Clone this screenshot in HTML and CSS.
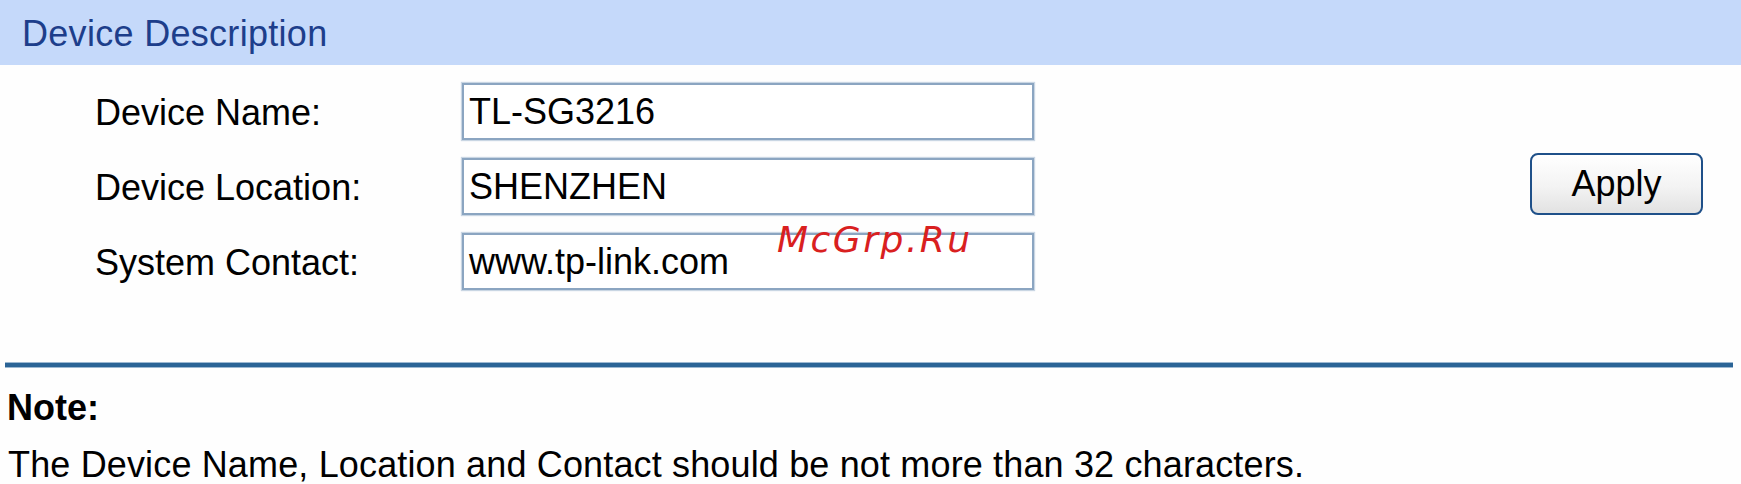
FILE: index.html
```html
<!DOCTYPE html>
<html>
<head>
<meta charset="utf-8">
<title>Device Description</title>
<link rel="stylesheet" href="styles.css">
</head>
<body>
<div class="page">
  <div class="section-head">Device Description</div>
  <div class="form-area">
    <div class="fields">
      <label class="field-label">Device Name:</label>
      <div class="field-box">TL-SG3216</div>
      <label class="field-label">Device Location:</label>
      <div class="field-box">SHENZHEN</div>
      <label class="field-label">System Contact:</label>
      <div class="field-box">www.tp-link.com</div>
    </div>
    <button class="apply-btn" type="button">Apply</button>
  </div>
  <div class="divider"></div>
  <div class="note">
    <div class="note-title">Note:</div>
    <div class="note-text">The Device Name, Location and Contact should be not more than 32 characters.</div>
  </div>
  <div class="watermark">McGrp.Ru</div>
</div>
</body>
</html>
```
FILE: styles.css
```css
html, body {
  margin: 0;
  padding: 0;
  background: #fefefe;
}

.page {
  position: relative;
  width: 1741px;
  height: 484px;
  overflow: hidden;
  font-family: "Liberation Sans", Arial, sans-serif;
  font-size: 36px;
  color: #000;
}

.section-head {
  height: 63px;
  padding-top: 2px;
  padding-left: 22px;
  line-height: 63px;
  background: #c5d9fa;
  color: #1d3e8b;
  letter-spacing: 0.3px;
}

.form-area {
  display: flex;
  align-items: center;
  padding-top: 18px;
  padding-left: 95px;
}

.fields {
  display: grid;
  grid-template-columns: 367px 572px;
  grid-auto-rows: 57px;
  row-gap: 18px;
}

.field-label {
  display: flex;
  align-items: center;
  line-height: 57px;
  padding-top: 1px;
}

.field-box {
  box-sizing: border-box;
  height: 57px;
  border: 2px solid #8ba5c1;
  box-shadow: 0 0 1px 1px #c9d6e3;
  padding-left: 5px;
  line-height: 53px;
  background: #fff;
  color: #000;
}

.apply-btn {
  box-sizing: border-box;
  margin-left: auto;
  margin-right: 38px;
  margin-top: -6px;
  width: 173px;
  height: 62px;
  border: 2px solid #1f5089;
  border-radius: 8px;
  background: linear-gradient(#ffffff 0%, #f3f3f3 55%, #e2e2e2 100%);
  font-family: "Liberation Sans", Arial, sans-serif;
  font-size: 36px;
  color: #000;
  padding: 0;
  line-height: 58px;
}

.divider {
  margin: 72px 8px 0 5px;
  height: 4px;
  background: #2b6496;
  border-top: 1px solid #9db9d2;
  border-bottom: 1px solid #9db9d2;
}

.note {
  margin-top: 11px;
  padding-left: 7px;
  line-height: 57px;
}

.note-title {
  font-weight: bold;
}

.note-text {
  padding-left: 1px;
  letter-spacing: 0.15px;
}

.watermark {
  position: absolute;
  left: 777px;
  top: 219px;
  font-family: "DejaVu Sans", sans-serif;
  font-style: italic;
  font-size: 36px;
  letter-spacing: 2.5px;
  color: #d9201f;
}
```
